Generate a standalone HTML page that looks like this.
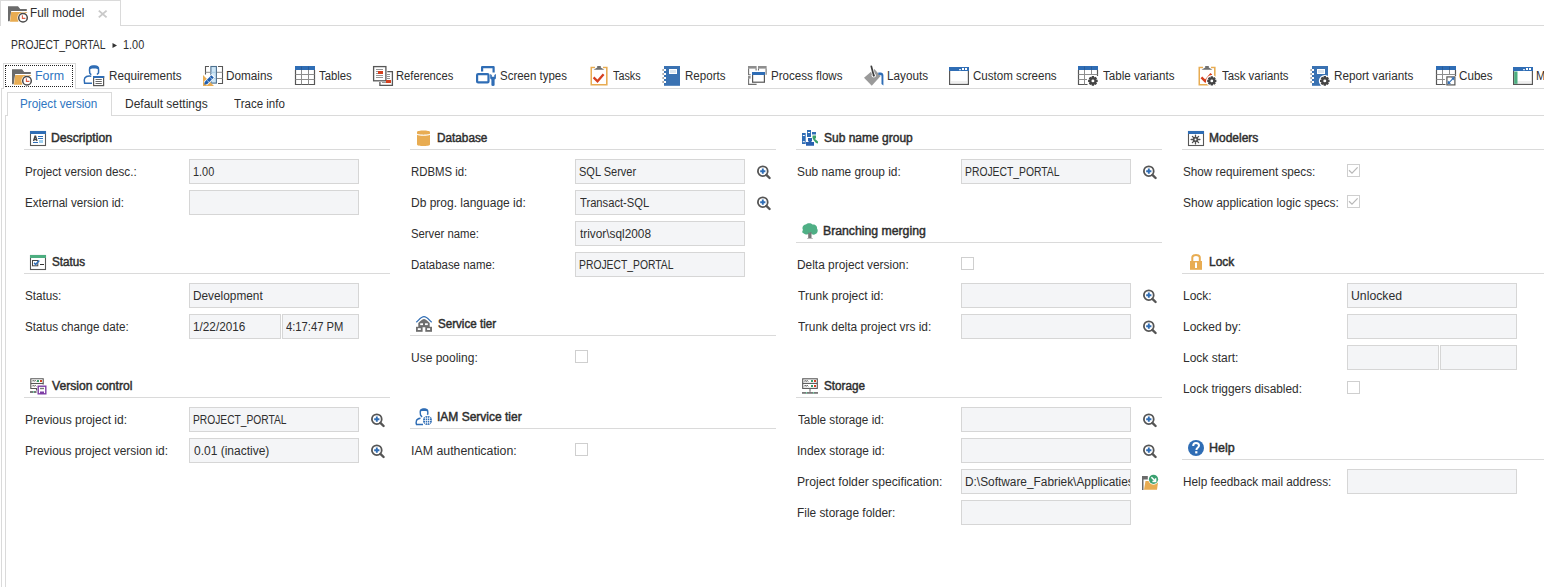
<!DOCTYPE html>
<html><head><meta charset="utf-8"><style>
html,body{margin:0;padding:0;background:#fff;width:1544px;height:587px;overflow:hidden;position:relative}
.t{position:absolute;font-family:"Liberation Sans",sans-serif;font-size:12px;line-height:12px;color:#2E2E2E;white-space:pre}
.blue{color:#2E75C1}
svg{overflow:visible}
</style></head><body>
<div style="position:absolute;left:0px;top:0px;width:121px;height:1px;background:#DADADA"></div>
<div style="position:absolute;left:0px;top:0px;width:1px;height:26px;background:#DADADA"></div>
<div style="position:absolute;left:120px;top:0px;width:1px;height:26px;background:#DADADA"></div>
<div style="position:absolute;left:120px;top:25px;width:1424px;height:1px;background:#DADADA"></div>
<svg style="position:absolute;left:6px;top:3px" width="24" height="22" viewBox="0 0 24 22"><path d="M2 3.2 H12 L14.2 6 H20.8 V8 H5.2 L3.7 18.2 H2 Z" fill="#6B6B6B"/><path d="M5.2 9 H21.5 L19 11 H14 L12.3 18.8 H4 Z" fill="#E8AC52"/><circle cx="17" cy="14.8" r="5.6" fill="#fff"/><circle cx="17" cy="14.8" r="4.3" fill="#fff" stroke="#4A4A4A" stroke-width="1.5"/><path d="M16.4 12.3 V15.4 H19.4" fill="none" stroke="#DD5E43" stroke-width="1.1"/></svg>
<svg style="position:absolute;left:98px;top:10px" width="10" height="8" viewBox="0 0 10 8"><path d="M0.8 0.6 L8.6 7.4 M8.6 0.6 L0.8 7.4" stroke="#C9C9C9" stroke-width="1.9"/></svg>
<svg style="position:absolute;left:112px;top:43px" width="6" height="5" viewBox="0 0 6 5"><path d="M0.5 0 L5 2.5 L0.5 5Z" fill="#333"/></svg>
<div style="position:absolute;left:3px;top:63px;width:73px;height:1px;background:#DADADA"></div>
<div style="position:absolute;left:3px;top:63px;width:1px;height:26px;background:#DADADA"></div>
<div style="position:absolute;left:75px;top:63px;width:1px;height:26px;background:#DADADA"></div>
<div style="position:absolute;left:75px;top:88px;width:1469px;height:1px;background:#DADADA"></div>
<div style="position:absolute;left:1px;top:88px;width:3px;height:1px;background:#DADADA"></div>
<div style="position:absolute;left:1px;top:88px;width:1px;height:499px;background:#DADADA"></div>
<div style="position:absolute;left:5px;top:65px;width:68px;height:22px;box-sizing:border-box;border:1px dotted #222"></div>
<svg style="position:absolute;left:10px;top:66px" width="24" height="22" viewBox="0 0 24 22"><path d="M2 3.2 H12 L14.2 6 H20.8 V8 H5.2 L3.7 18.2 H2 Z" fill="#6B6B6B"/><path d="M5.2 9 H21.5 L19 11 H14 L12.3 18.8 H4 Z" fill="#E8AC52"/><circle cx="17" cy="14.8" r="5.6" fill="#fff"/><circle cx="17" cy="14.8" r="4.3" fill="#fff" stroke="#4A4A4A" stroke-width="1.5"/><path d="M16.4 12.3 V15.4 H19.4" fill="none" stroke="#DD5E43" stroke-width="1.1"/></svg>
<svg style="position:absolute;left:82px;top:64px" width="24" height="24" viewBox="0 0 24 24"><path d="M7.5 6 C7.3 2.5 9 2 12 2 C15 2 16.8 2.5 16.6 6 L16.5 9 L15 10.5 M7.5 6 L7.8 9.2 L9.2 10.8" fill="none" stroke="#2F6DB5" stroke-width="1.5"/><path d="M7.3 5.8 C7.3 2.2 9 1.8 12 1.8 C15 1.8 16.8 2.2 16.8 5.8 L15.5 5 C13 4.4 11 4.4 8.6 5 Z" fill="#2F6DB5"/><path d="M9.3 12.3 C7.5 12 4 12.3 2.8 14 C2 15.5 2.2 18 2.6 19.2 H10" fill="none" stroke="#2F6DB5" stroke-width="1.5"/><rect x="11.6" y="12.6" width="10" height="9" fill="#fff" stroke="#575757" stroke-width="1.2"/><rect x="11" y="12" width="11.2" height="2" fill="#2F6DB5"/><path d="M13.5 15.5 H19.8 M13.5 17.5 H19.8 M13.5 19.5 H19.8" stroke="#575757" stroke-width="0.9"/></svg>
<svg style="position:absolute;left:200px;top:63px" width="26" height="26" viewBox="0 0 26 26"><rect x="10.9" y="3.5" width="5.5" height="16.6" fill="#CDE6F7" stroke="#4C6F8E" stroke-width="1.1"/><path d="M9 3.5 H5.5 V11.5 M18 3.5 H22.5 V20.5 H18" fill="none" stroke="#575757" stroke-width="1.1"/><path d="M5.5 9.3 H10.3 M17 9.3 H22.5 M17 15.5 H22.5" stroke="#8E8E8E" stroke-width="1"/><path d="M11.3 9.3 H16 M11.3 15.5 H16" stroke="#A9CBE3" stroke-width="1"/><path d="M3 12 V23 H14 Z" fill="#E8AC52"/><path d="M5.2 20.8 L13.4 12.6" stroke="#fff" stroke-width="4.8"/><path d="M5.6 20.4 L12.6 13.4" stroke="#1E5FB0" stroke-width="3.4"/><path d="M7.2 17.5 L9 19.3 M10.2 14.5 L12 16.3" stroke="#fff" stroke-width="0.7"/><path d="M4.2 21.8 L5 19 L7 21 Z" fill="#1E5FB0"/></svg>
<svg style="position:absolute;left:292px;top:63px" width="26" height="26" viewBox="0 0 26 26"><rect x="3" y="3" width="20" height="4" fill="#2F6DB5"/><path d="M9.5 3.5 V7 M16.5 3.5 V7" stroke="#2A5C98" stroke-width="1"/><path d="M3.5 7 V21.5 H22.5 V7" fill="none" stroke="#575757" stroke-width="1.2"/><path d="M9.5 7 V21.5 M16.5 7 V21.5 M3.5 11.5 H22.5 M3.5 16.5 H22.5" stroke="#8E8E8E" stroke-width="1"/></svg>
<svg style="position:absolute;left:370px;top:63px" width="26" height="26" viewBox="0 0 26 26"><rect x="3.6" y="3.6" width="12.3" height="14.2" fill="#fff" stroke="#575757" stroke-width="1.3"/><path d="M6 6.5 H13 M6 8.5 H8 M6 10.5 H8 M6 12.5 H13 M6 14.5 H13" stroke="#8A8A8A" stroke-width="0.9"/><rect x="8" y="8" width="5" height="3" fill="#D5401F"/><path d="M17.3 8.6 H22.4 V22.4 H9.9 V19" fill="none" stroke="#575757" stroke-width="1.3"/><path d="M17 11.5 H20 M17 13.5 H20 M17 15.5 H20 M12 19.5 H16" stroke="#8A8A8A" stroke-width="0.9"/><rect x="16" y="17" width="5" height="3" fill="#D5401F"/></svg>
<svg style="position:absolute;left:473px;top:63px" width="26" height="26" viewBox="0 0 26 26"><path d="M9.1 8.6 V4.2 H20.6 V9.5" fill="none" stroke="#2F6DB5" stroke-width="2.2" stroke-linejoin="round"/><rect x="4.1" y="11.1" width="11.4" height="8.3" rx="1" fill="none" stroke="#2F6DB5" stroke-width="2.2"/><path d="M17.2 11 V15 Q17.2 16.2 18.4 16.6 V22 Q18.4 23 20 23 Q21.6 23 21.6 22 V16.6 Q22.9 16.2 22.9 15 V11 L21.3 12 V13.8 H18.8 V12 Z" fill="#2F6DB5"/></svg>
<svg style="position:absolute;left:586px;top:63px" width="26" height="26" viewBox="0 0 26 26"><g transform="translate(0,0)"><path d="M9 4.6 H5.3 V21.8 H20.8 V4.6 H17" fill="none" stroke="#E8AC52" stroke-width="1.6"/><rect x="6" y="5.4" width="14" height="15.6" fill="#fff"/><path d="M11.2 3 H14.8 V4.4 L18.4 6.8 H7.6 L11.2 4.4 Z" fill="#707070"/></g><path d="M7.6 14.4 L11.5 18.3 L17.6 11.2" fill="none" stroke="#D5401F" stroke-width="2.3"/></svg>
<svg style="position:absolute;left:660px;top:63px" width="26" height="26" viewBox="0 0 26 26"><rect x="4" y="3" width="16" height="19.8" fill="#3A72B2"/><rect x="9" y="6" width="8" height="5" fill="#fff"/><rect x="10" y="7" width="6" height="3" fill="#DCE6F0"/><rect x="3" y="6" width="3" height="2" fill="#fff"/><rect x="2.6" y="6" width="1" height="2" fill="#777"/><rect x="3" y="10" width="3" height="2" fill="#fff"/><rect x="2.6" y="10" width="1" height="2" fill="#777"/><rect x="3" y="14" width="3" height="2" fill="#fff"/><rect x="2.6" y="14" width="1" height="2" fill="#777"/><rect x="3" y="18" width="3" height="2" fill="#fff"/><rect x="2.6" y="18" width="1" height="2" fill="#777"/></svg>
<svg style="position:absolute;left:745px;top:63px" width="26" height="26" viewBox="0 0 26 26"><rect x="3" y="3" width="8.6" height="2.6" fill="#8E8E8E"/><rect x="13" y="3" width="8.6" height="2.6" fill="#8E8E8E"/><path d="M3.6 5.5 V11.7 H5.7 M11.1 5.5 V7.5 M13.5 5.5 V7.5 M21.1 5.5 V11.8" fill="none" stroke="#707070" stroke-width="1.1"/><rect x="3" y="13" width="2.6" height="2.6" fill="#8E8E8E"/><path d="M3.6 15.5 V21.4 H11.6" fill="none" stroke="#707070" stroke-width="1.1"/><rect x="7.6" y="9.6" width="11.8" height="9.6" fill="#fff" stroke="#575757" stroke-width="1.2"/><rect x="7" y="9" width="13" height="3" fill="#2F6DB5"/></svg>
<svg style="position:absolute;left:861px;top:63px" width="26" height="26" viewBox="0 0 26 26"><path d="M3 14.8 L13.3 6 L19.6 13 L10.8 22.8 Z" fill="#9A9A9A"/><ellipse cx="12.8" cy="12.5" rx="2.2" ry="2" fill="#fff"/><path d="M10.3 3.3 L12.6 12" stroke="#fff" stroke-width="3" stroke-linecap="round"/><path d="M10.3 3.3 L12.6 12" stroke="#3E3E3E" stroke-width="1.7" stroke-linecap="round"/><circle cx="12.8" cy="12.6" r="1.1" fill="#3E3E3E"/><path d="M17.3 9.6 H19.6 C21.3 9.6 22.4 10.8 22.4 12.3 V22.5 L20.5 21 V12.5 L17.3 11.5 Z" fill="#2F6DB5"/></svg>
<svg style="position:absolute;left:946px;top:63px" width="26" height="26" viewBox="0 0 26 26"><rect x="3.6" y="4.6" width="18.8" height="16.8" fill="#fff" stroke="#575757" stroke-width="1.2"/><rect x="3" y="4" width="20" height="4" fill="#2F6DB5"/><rect x="13" y="6.2" width="2" height="1" fill="#fff"/><rect x="16" y="5" width="2" height="2" fill="#fff"/><rect x="19" y="5" width="2" height="2" fill="#fff"/><rect x="5" y="18" width="16" height="2" fill="#EFEFEF"/></svg>
<svg style="position:absolute;left:1075px;top:63px" width="26" height="26" viewBox="0 0 26 26"><rect x="3" y="3" width="20" height="4" fill="#2F6DB5"/><path d="M9.5 3.5 V7 M16.5 3.5 V7" stroke="#2A5C98" stroke-width="1"/><path d="M22.5 7 V13 M3.5 7 V21.5 H12.5" fill="none" stroke="#575757" stroke-width="1.2"/><path d="M9.5 7 V21.5 M16.5 7 V11.5 M3.5 11.5 H22.5 M3.5 16.5 H12" stroke="#8E8E8E" stroke-width="1"/><path d="M22.68 16.83 L22.68 18.97 L21.12 19.34 L21.20 19.16 L22.04 20.53 L20.53 22.04 L19.16 21.20 L19.34 21.12 L18.97 22.68 L16.83 22.68 L16.46 21.12 L16.64 21.20 L15.27 22.04 L13.76 20.53 L14.60 19.16 L14.68 19.34 L13.12 18.97 L13.12 16.83 L14.68 16.46 L14.60 16.64 L13.76 15.27 L15.27 13.76 L16.64 14.60 L16.46 14.68 L16.83 13.12 L18.97 13.12 L19.34 14.68 L19.16 14.60 L20.53 13.76 L22.04 15.27 L21.20 16.64 L21.12 16.46Z" fill="#444"/><circle cx="17.9" cy="17.9" r="1.47" fill="#fff"/></svg>
<svg style="position:absolute;left:1195px;top:63px" width="26" height="26" viewBox="0 0 26 26"><g transform="translate(-1,0)"><path d="M9 4.6 H5.3 V21.8 H20.8 V4.6 H17" fill="none" stroke="#E8AC52" stroke-width="1.6"/><rect x="6" y="5.4" width="14" height="15.6" fill="#fff"/><path d="M11.2 3 H14.8 V4.4 L18.4 6.8 H7.6 L11.2 4.4 Z" fill="#707070"/></g><path d="M6.4 14.4 L10.2 18.2 L16.3 10.8" fill="none" stroke="#D5401F" stroke-width="2.4"/><circle cx="16.8" cy="17.9" r="5.800000000000001" fill="#fff"/><path d="M21.39 16.87 L21.39 18.93 L19.89 19.28 L19.96 19.11 L20.77 20.42 L19.32 21.87 L18.01 21.06 L18.18 20.99 L17.83 22.49 L15.77 22.49 L15.42 20.99 L15.59 21.06 L14.28 21.87 L12.83 20.42 L13.64 19.11 L13.71 19.28 L12.21 18.93 L12.21 16.87 L13.71 16.52 L13.64 16.69 L12.83 15.38 L14.28 13.93 L15.59 14.74 L15.42 14.81 L15.77 13.31 L17.83 13.31 L18.18 14.81 L18.01 14.74 L19.32 13.93 L20.77 15.38 L19.96 16.69 L19.89 16.52Z" fill="#444"/><circle cx="16.8" cy="17.9" r="1.41" fill="#fff"/></svg>
<svg style="position:absolute;left:1308px;top:63px" width="26" height="26" viewBox="0 0 26 26"><rect x="4" y="3" width="16" height="19.8" fill="#3A72B2"/><rect x="9" y="6" width="8" height="5" fill="#fff"/><rect x="10" y="7" width="6" height="3" fill="#DCE6F0"/><rect x="3" y="6" width="3" height="2" fill="#fff"/><rect x="2.6" y="6" width="1" height="2" fill="#777"/><rect x="3" y="10" width="3" height="2" fill="#fff"/><rect x="2.6" y="10" width="1" height="2" fill="#777"/><rect x="3" y="14" width="3" height="2" fill="#fff"/><rect x="2.6" y="14" width="1" height="2" fill="#777"/><rect x="3" y="18" width="3" height="2" fill="#fff"/><rect x="2.6" y="18" width="1" height="2" fill="#777"/><circle cx="16.8" cy="17.9" r="6.0" fill="#fff"/><path d="M21.58 16.83 L21.58 18.97 L20.02 19.34 L20.10 19.16 L20.94 20.53 L19.43 22.04 L18.06 21.20 L18.24 21.12 L17.87 22.68 L15.73 22.68 L15.36 21.12 L15.54 21.20 L14.17 22.04 L12.66 20.53 L13.50 19.16 L13.58 19.34 L12.02 18.97 L12.02 16.83 L13.58 16.46 L13.50 16.64 L12.66 15.27 L14.17 13.76 L15.54 14.60 L15.36 14.68 L15.73 13.12 L17.87 13.12 L18.24 14.68 L18.06 14.60 L19.43 13.76 L20.94 15.27 L20.10 16.64 L20.02 16.46Z" fill="#444"/><circle cx="16.8" cy="17.9" r="1.47" fill="#fff"/></svg>
<svg style="position:absolute;left:1433px;top:63px" width="26" height="26" viewBox="0 0 26 26"><rect x="3" y="3" width="20" height="4" fill="#2F6DB5"/><path d="M9.5 3.5 V7 M16.5 3.5 V7" stroke="#2A5C98" stroke-width="1"/><path d="M22.5 7 V13 M3.5 7 V21.5 H12.5" fill="none" stroke="#575757" stroke-width="1.2"/><path d="M9.5 7 V21.5 M16.5 7 V11.5 M3.5 11.5 H22.5 M3.5 16.5 H12" stroke="#8E8E8E" stroke-width="1"/><rect x="13.9" y="13.9" width="8" height="8" fill="#fff" stroke="#575757" stroke-width="1.2"/><path d="M15.3 20.3 L20.7 14.9" stroke="#2F6DB5" stroke-width="1.1"/><path d="M14.6 21 L14.9 17.6 L18 20.7 Z M21.4 14.2 L21.1 17.6 L18 14.5 Z" fill="#2F6DB5"/></svg>
<svg style="position:absolute;left:1510px;top:63px" width="26" height="26" viewBox="0 0 26 26"><rect x="3.6" y="4.6" width="18.8" height="16.8" fill="#fff" stroke="#575757" stroke-width="1.2"/><rect x="3" y="4" width="20" height="4" fill="#2F6DB5"/><rect x="13" y="6.2" width="2" height="1" fill="#fff"/><rect x="16" y="5" width="2" height="2" fill="#fff"/><rect x="19" y="5" width="2" height="2" fill="#fff"/><rect x="5" y="18" width="16" height="2" fill="#EFEFEF"/><rect x="4.2" y="8.5" width="3.3" height="12.3" fill="#4DAE80"/></svg>
<div style="position:absolute;left:7px;top:92px;width:105px;height:1px;background:#DADADA"></div>
<div style="position:absolute;left:7px;top:92px;width:1px;height:24px;background:#DADADA"></div>
<div style="position:absolute;left:111px;top:92px;width:1px;height:24px;background:#DADADA"></div>
<div style="position:absolute;left:111px;top:115px;width:1433px;height:1px;background:#DADADA"></div>
<div style="position:absolute;left:5px;top:115px;width:3px;height:1px;background:#DADADA"></div>
<div style="position:absolute;left:5px;top:115px;width:1px;height:472px;background:#DADADA"></div>
<div style="position:absolute;left:24px;top:149px;width:366px;height:1px;background:#DADADA"></div>
<svg style="position:absolute;left:28px;top:128px" width="20" height="20" viewBox="0 0 20 20"><rect x="2.5" y="3.5" width="15" height="14" fill="#fff" stroke="#575757" stroke-width="1.1"/><rect x="2" y="3" width="16" height="3" fill="#2F6DB5"/><path d="M5.5 13 L7 8.2 H7.6 L9 13 M6 11.5 H8.6" fill="none" stroke="#444" stroke-width="1.3"/><path d="M10 8.5 H15 M10 10.5 H15 M5 14.5 H10" stroke="#2F6DB5" stroke-width="1"/><rect x="11" y="12" width="4" height="3" fill="#9FD0F0"/></svg>
<div style="position:absolute;left:189px;top:159px;width:170px;height:25px;background:#F4F5F7;border:1px solid #D6D6D6;box-sizing:border-box"></div>
<div style="position:absolute;left:189px;top:190px;width:170px;height:25px;background:#F4F5F7;border:1px solid #D6D6D6;box-sizing:border-box"></div>
<div style="position:absolute;left:24px;top:273px;width:366px;height:1px;background:#DADADA"></div>
<svg style="position:absolute;left:28px;top:252px" width="20" height="20" viewBox="0 0 20 20"><rect x="2.5" y="3.5" width="15" height="14" fill="#fff" stroke="#575757" stroke-width="1.1"/><rect x="2" y="3" width="16" height="3" fill="#4DAE80"/><rect x="4.5" y="8.5" width="5.3" height="5.3" fill="none" stroke="#444" stroke-width="1"/><path d="M6.2 10.8 L7.6 12.6 L11.3 8.6" fill="none" stroke="#2F6DB5" stroke-width="1.5"/><path d="M12 12.5 H16" stroke="#333" stroke-width="1"/></svg>
<div style="position:absolute;left:189px;top:283px;width:170px;height:25px;background:#F4F5F7;border:1px solid #D6D6D6;box-sizing:border-box"></div>
<div style="position:absolute;left:189px;top:314px;width:92px;height:25px;background:#F4F5F7;border:1px solid #D6D6D6;box-sizing:border-box"></div>
<div style="position:absolute;left:282px;top:314px;width:77px;height:25px;background:#F4F5F7;border:1px solid #D6D6D6;box-sizing:border-box"></div>
<div style="position:absolute;left:24px;top:397px;width:366px;height:1px;background:#DADADA"></div>
<svg style="position:absolute;left:28px;top:376px" width="20" height="20" viewBox="0 0 20 20"><path d="M8.5 14.5 V12.5 H2.8 V2.8 H15.2 V8.5" fill="#fff" stroke="#575757" stroke-width="1.1"/><path d="M2.8 7.5 H15.2" stroke="#575757" stroke-width="1.1"/><path d="M4.2 5.4 L5.2 4.3 L6.2 5.4 L7.2 4.3 L8.2 5.4 M4.2 10.4 L5.2 9.3 L6.2 10.4 L7.2 9.3 L8.2 10.4" fill="none" stroke="#555" stroke-width="1"/><rect x="9" y="4" width="2" height="2" fill="#3A9F6A"/><rect x="12" y="4" width="2" height="2" fill="#D5401F"/><rect x="2" y="15" width="6.5" height="2" fill="#7A7A7A"/><rect x="5" y="15" width="1" height="2" fill="#7BD3A8"/><rect x="10.2" y="10.2" width="7.6" height="7.6" fill="#fff" stroke="#7E3DA6" stroke-width="1.4"/><rect x="12" y="11.8" width="4" height="1.4" fill="#777"/><path d="M12 18 V15.5 H16 V18" fill="#7E3DA6"/></svg>
<div style="position:absolute;left:189px;top:407px;width:170px;height:25px;background:#F4F5F7;border:1px solid #D6D6D6;box-sizing:border-box"></div>
<svg style="position:absolute;left:370px;top:413px" width="16" height="16" viewBox="0 0 16 16"><circle cx="6.8" cy="6.2" r="4.9" fill="#fff" stroke="#555" stroke-width="1.8"/><path d="M10.4 9.8 L13.6 13" stroke="#555" stroke-width="2.4" stroke-linecap="round"/><path d="M6.8 3.6 V8.8 M4.2 6.2 H9.4" stroke="#2F6DB5" stroke-width="1.9"/></svg>
<div style="position:absolute;left:189px;top:438px;width:170px;height:25px;background:#F4F5F7;border:1px solid #D6D6D6;box-sizing:border-box"></div>
<svg style="position:absolute;left:370px;top:444px" width="16" height="16" viewBox="0 0 16 16"><circle cx="6.8" cy="6.2" r="4.9" fill="#fff" stroke="#555" stroke-width="1.8"/><path d="M10.4 9.8 L13.6 13" stroke="#555" stroke-width="2.4" stroke-linecap="round"/><path d="M6.8 3.6 V8.8 M4.2 6.2 H9.4" stroke="#2F6DB5" stroke-width="1.9"/></svg>
<div style="position:absolute;left:410px;top:149px;width:366px;height:1px;background:#DADADA"></div>
<svg style="position:absolute;left:414px;top:128px" width="20" height="20" viewBox="0 0 20 20"><path d="M3 4 C3 2 16 2 16 4 V5.5 C16 7 3 7 3 5.5 Z" fill="#E8AC52"/><path d="M3 6.8 C5 8.2 14 8.2 16 6.8 V16.5 C16 18.5 3 18.5 3 16.5 Z" fill="#E8AC52"/></svg>
<div style="position:absolute;left:575px;top:159px;width:170px;height:25px;background:#F4F5F7;border:1px solid #D6D6D6;box-sizing:border-box"></div>
<svg style="position:absolute;left:756px;top:165px" width="16" height="16" viewBox="0 0 16 16"><circle cx="6.8" cy="6.2" r="4.9" fill="#fff" stroke="#555" stroke-width="1.8"/><path d="M10.4 9.8 L13.6 13" stroke="#555" stroke-width="2.4" stroke-linecap="round"/><path d="M6.8 3.6 V8.8 M4.2 6.2 H9.4" stroke="#2F6DB5" stroke-width="1.9"/></svg>
<div style="position:absolute;left:575px;top:190px;width:170px;height:25px;background:#F4F5F7;border:1px solid #D6D6D6;box-sizing:border-box"></div>
<svg style="position:absolute;left:756px;top:196px" width="16" height="16" viewBox="0 0 16 16"><circle cx="6.8" cy="6.2" r="4.9" fill="#fff" stroke="#555" stroke-width="1.8"/><path d="M10.4 9.8 L13.6 13" stroke="#555" stroke-width="2.4" stroke-linecap="round"/><path d="M6.8 3.6 V8.8 M4.2 6.2 H9.4" stroke="#2F6DB5" stroke-width="1.9"/></svg>
<div style="position:absolute;left:575px;top:221px;width:170px;height:25px;background:#F4F5F7;border:1px solid #D6D6D6;box-sizing:border-box"></div>
<div style="position:absolute;left:575px;top:252px;width:170px;height:25px;background:#F4F5F7;border:1px solid #D6D6D6;box-sizing:border-box"></div>
<div style="position:absolute;left:410px;top:335px;width:366px;height:1px;background:#DADADA"></div>
<svg style="position:absolute;left:414px;top:314px" width="20" height="20" viewBox="0 0 20 20"><path d="M2.3 8.3 C5 6 7 2.6 10 2.6 C13 2.6 15 6 17.7 8.3" fill="none" stroke="#2F6DB5" stroke-width="1.3"/><path d="M4.3 13.2 V9 C6 7.5 8 5 10 5 C12 5 14 7.5 15.7 9 V13.2 Z" fill="#6E6E6E"/><rect x="6.2" y="9.3" width="2.8" height="1.8" fill="#fff"/><rect x="11" y="9.3" width="2.8" height="1.8" fill="#fff"/><rect x="2" y="12.8" width="6.6" height="5" fill="#6E6E6E"/><rect x="11.3" y="12.8" width="6.7" height="5" fill="#6E6E6E"/><rect x="3.8" y="14.2" width="3" height="1.8" fill="#fff"/><rect x="13.1" y="14.2" width="3" height="1.8" fill="#fff"/></svg>
<div style="position:absolute;left:575px;top:350px;width:13px;height:13px;border:1px solid #CFCFCF;box-sizing:border-box;background:#fff"></div>
<div style="position:absolute;left:410px;top:428px;width:366px;height:1px;background:#DADADA"></div>
<svg style="position:absolute;left:414px;top:407px" width="20" height="20" viewBox="0 0 20 20"><path d="M6.2 5 C6 2.3 8 2 10 2 C12.3 2 14 2.3 13.8 5 V7 L13 7.5 M6.2 5 L6.5 8 L8 10" fill="none" stroke="#2F6DB5" stroke-width="1.4"/><path d="M6 4.8 C6 2 8 1.8 10 1.8 C12.3 1.8 14 2 14 4.8 L13 4.3 C11 3.9 9 3.9 7 4.3 Z" fill="#2F6DB5"/><path d="M6.5 11.3 C5 11.5 3 12 2.5 13.5 C2 15 2.3 17 2.5 17.5 H9" fill="none" stroke="#2F6DB5" stroke-width="1.4"/><circle cx="13.5" cy="13.5" r="5.3" fill="#fff"/><circle cx="13.5" cy="13.5" r="4.5" fill="#2F6DB5"/><path d="M9.3 13.5 H17.7 M13.5 9.3 V17.7 M10.3 11.2 H16.7 M10.3 15.8 H16.7 M11.5 9.8 V17.2 M15.5 9.8 V17.2" stroke="#fff" stroke-width="0.7"/></svg>
<div style="position:absolute;left:575px;top:443px;width:13px;height:13px;border:1px solid #CFCFCF;box-sizing:border-box;background:#fff"></div>
<div style="position:absolute;left:796px;top:149px;width:366px;height:1px;background:#DADADA"></div>
<svg style="position:absolute;left:800px;top:128px" width="20" height="20" viewBox="0 0 20 20"><rect x="2" y="5" width="3.7" height="11" fill="#2F6DB5"/><rect x="7" y="2" width="4" height="7" fill="#2F6DB5"/><rect x="12" y="4" width="4" height="2.5" fill="#2F6DB5"/><rect x="2.8" y="7" width="2" height="1" fill="#fff"/><rect x="2.8" y="13.2" width="2" height="1" fill="#fff"/><rect x="7.8" y="4" width="2.3" height="1" fill="#fff"/><path d="M8 10 H12 V13 L11 14 H14 V17.8 H6 V14 H9 L8 13 Z" fill="#2860B0"/><path d="M12.5 7.5 H16 V10 L15 11 L18 13.5 V15.5 L16 15 L13.5 12 L12.5 10 Z" fill="#3A9F6A"/></svg>
<div style="position:absolute;left:961px;top:159px;width:170px;height:25px;background:#F4F5F7;border:1px solid #D6D6D6;box-sizing:border-box"></div>
<svg style="position:absolute;left:1142px;top:165px" width="16" height="16" viewBox="0 0 16 16"><circle cx="6.8" cy="6.2" r="4.9" fill="#fff" stroke="#555" stroke-width="1.8"/><path d="M10.4 9.8 L13.6 13" stroke="#555" stroke-width="2.4" stroke-linecap="round"/><path d="M6.8 3.6 V8.8 M4.2 6.2 H9.4" stroke="#2F6DB5" stroke-width="1.9"/></svg>
<div style="position:absolute;left:796px;top:242px;width:366px;height:1px;background:#DADADA"></div>
<svg style="position:absolute;left:800px;top:221px" width="20" height="20" viewBox="0 0 20 20"><path d="M3 9 C1.5 6 3.5 3.5 6 3.5 C7 2 11 1.8 12.5 3.5 C15 3 17.5 5 17 7.5 C18.5 9 17.5 12.5 15.5 13 C14 14.5 11.5 13.5 11 12 L9.5 12.5 C8 14 5 13.8 4 12.5 C2 12 1.8 10.5 3 9 Z" fill="#4FAF85"/><path d="M8.2 11 L9 12.5 L10 11.5 L11.5 11 L11.5 17 H12.8 V17.6 H7.2 V17 H8.2 Z" fill="#777"/></svg>
<div style="position:absolute;left:961px;top:257px;width:13px;height:13px;border:1px solid #CFCFCF;box-sizing:border-box;background:#fff"></div>
<div style="position:absolute;left:961px;top:283px;width:170px;height:25px;background:#F4F5F7;border:1px solid #D6D6D6;box-sizing:border-box"></div>
<svg style="position:absolute;left:1142px;top:289px" width="16" height="16" viewBox="0 0 16 16"><circle cx="6.8" cy="6.2" r="4.9" fill="#fff" stroke="#555" stroke-width="1.8"/><path d="M10.4 9.8 L13.6 13" stroke="#555" stroke-width="2.4" stroke-linecap="round"/><path d="M6.8 3.6 V8.8 M4.2 6.2 H9.4" stroke="#2F6DB5" stroke-width="1.9"/></svg>
<div style="position:absolute;left:961px;top:314px;width:170px;height:25px;background:#F4F5F7;border:1px solid #D6D6D6;box-sizing:border-box"></div>
<svg style="position:absolute;left:1142px;top:320px" width="16" height="16" viewBox="0 0 16 16"><circle cx="6.8" cy="6.2" r="4.9" fill="#fff" stroke="#555" stroke-width="1.8"/><path d="M10.4 9.8 L13.6 13" stroke="#555" stroke-width="2.4" stroke-linecap="round"/><path d="M6.8 3.6 V8.8 M4.2 6.2 H9.4" stroke="#2F6DB5" stroke-width="1.9"/></svg>
<div style="position:absolute;left:796px;top:397px;width:366px;height:1px;background:#DADADA"></div>
<svg style="position:absolute;left:800px;top:376px" width="20" height="20" viewBox="0 0 20 20"><rect x="2.7" y="2.8" width="14.6" height="9.6" fill="#fff" stroke="#575757" stroke-width="1.1"/><path d="M2.7 7.4 H17.3" stroke="#575757" stroke-width="1.1"/><path d="M4.2 5.6 L5.2 4.4 L6.2 5.6 L7.2 4.4 L8.2 5.6 M4.2 10.4 L5.2 9.2 L6.2 10.4 L7.2 9.2 L8.2 10.4" fill="none" stroke="#555" stroke-width="1"/><rect x="11" y="4" width="2" height="2" fill="#3A9F6A"/><rect x="14" y="4" width="2" height="2" fill="#D5401F"/><rect x="11" y="9" width="2" height="2" fill="#3A9F6A"/><rect x="14" y="9" width="2" height="2" fill="#D5401F"/><rect x="9.4" y="12.8" width="1.2" height="3" fill="#777"/><rect x="2" y="16" width="16" height="1.8" fill="#7A7A7A"/><rect x="6" y="16" width="1" height="1.8" fill="#7BD3A8"/><rect x="13" y="16" width="1" height="1.8" fill="#7BD3A8"/></svg>
<div style="position:absolute;left:961px;top:407px;width:170px;height:25px;background:#F4F5F7;border:1px solid #D6D6D6;box-sizing:border-box"></div>
<svg style="position:absolute;left:1142px;top:413px" width="16" height="16" viewBox="0 0 16 16"><circle cx="6.8" cy="6.2" r="4.9" fill="#fff" stroke="#555" stroke-width="1.8"/><path d="M10.4 9.8 L13.6 13" stroke="#555" stroke-width="2.4" stroke-linecap="round"/><path d="M6.8 3.6 V8.8 M4.2 6.2 H9.4" stroke="#2F6DB5" stroke-width="1.9"/></svg>
<div style="position:absolute;left:961px;top:438px;width:170px;height:25px;background:#F4F5F7;border:1px solid #D6D6D6;box-sizing:border-box"></div>
<svg style="position:absolute;left:1142px;top:444px" width="16" height="16" viewBox="0 0 16 16"><circle cx="6.8" cy="6.2" r="4.9" fill="#fff" stroke="#555" stroke-width="1.8"/><path d="M10.4 9.8 L13.6 13" stroke="#555" stroke-width="2.4" stroke-linecap="round"/><path d="M6.8 3.6 V8.8 M4.2 6.2 H9.4" stroke="#2F6DB5" stroke-width="1.9"/></svg>
<div style="position:absolute;left:961px;top:469px;width:170px;height:25px;background:#F4F5F7;border:1px solid #D6D6D6;box-sizing:border-box"></div>
<svg style="position:absolute;left:1138px;top:470px" width="24" height="24" viewBox="0 0 24 24"><path d="M4 6 H9.8 V9.5 H5.5 L5.5 20 H4 Z" fill="#6B6B6B"/><path d="M7.5 11 H14 L16 12.5 H20 L19 19.8 H6 Z" fill="#E8AC52"/><circle cx="15.5" cy="9.3" r="5.4" fill="#fff"/><circle cx="15.5" cy="9.3" r="4.6" fill="#3AA070"/><path d="M13.4 7.2 L17.2 11 M17.6 8.2 V11.4 H14.4" fill="none" stroke="#fff" stroke-width="1.5"/></svg>
<div style="position:absolute;left:961px;top:500px;width:170px;height:25px;background:#F4F5F7;border:1px solid #D6D6D6;box-sizing:border-box"></div>
<div style="position:absolute;left:1182px;top:149px;width:362px;height:1px;background:#DADADA"></div>
<svg style="position:absolute;left:1186px;top:128px" width="20" height="20" viewBox="0 0 20 20"><rect x="2.5" y="3.5" width="15" height="14" fill="#fff" stroke="#575757" stroke-width="1.1"/><rect x="2" y="3" width="16" height="3" fill="#2F6DB5"/><path d="M11.30 11.50 L13.90 11.50" stroke="#505050" stroke-width="1.3" stroke-linecap="round"/><path d="M10.77 12.77 L12.61 14.61" stroke="#505050" stroke-width="1.3" stroke-linecap="round"/><path d="M9.50 13.30 L9.50 15.90" stroke="#505050" stroke-width="1.3" stroke-linecap="round"/><path d="M8.23 12.77 L6.39 14.61" stroke="#505050" stroke-width="1.3" stroke-linecap="round"/><path d="M7.70 11.50 L5.10 11.50" stroke="#505050" stroke-width="1.3" stroke-linecap="round"/><path d="M8.23 10.23 L6.39 8.39" stroke="#505050" stroke-width="1.3" stroke-linecap="round"/><path d="M9.50 9.70 L9.50 7.10" stroke="#505050" stroke-width="1.3" stroke-linecap="round"/><path d="M10.77 10.23 L12.61 8.39" stroke="#505050" stroke-width="1.3" stroke-linecap="round"/><circle cx="9.5" cy="11.5" r="2.7" fill="#505050"/><circle cx="9.5" cy="11.5" r="1" fill="#fff"/></svg>
<div style="position:absolute;left:1347px;top:164px;width:13px;height:13px;border:1px solid #CFCFCF;box-sizing:border-box;background:#fff"></div>
<svg style="position:absolute;left:1347px;top:164px" width="13" height="13" viewBox="0 0 13 13"><path d="M2 6.3 L5 9.2 L10.6 3.3" fill="none" stroke="#B8B8B8" stroke-width="1.2"/></svg>
<div style="position:absolute;left:1347px;top:195px;width:13px;height:13px;border:1px solid #CFCFCF;box-sizing:border-box;background:#fff"></div>
<svg style="position:absolute;left:1347px;top:195px" width="13" height="13" viewBox="0 0 13 13"><path d="M2 6.3 L5 9.2 L10.6 3.3" fill="none" stroke="#B8B8B8" stroke-width="1.2"/></svg>
<div style="position:absolute;left:1182px;top:273px;width:362px;height:1px;background:#DADADA"></div>
<svg style="position:absolute;left:1186px;top:252px" width="20" height="20" viewBox="0 0 20 20"><path d="M6.3 9 V5.5 C6.3 3.5 7.5 3 10 3 C12.5 3 13.8 3.5 13.8 5.5 V9" fill="none" stroke="#E8AC52" stroke-width="2"/><rect x="4" y="9" width="12" height="8.8" fill="#E8AC52"/><rect x="9" y="10.5" width="2" height="5.5" fill="#fff"/></svg>
<div style="position:absolute;left:1347px;top:283px;width:170px;height:25px;background:#F4F5F7;border:1px solid #D6D6D6;box-sizing:border-box"></div>
<div style="position:absolute;left:1347px;top:314px;width:170px;height:25px;background:#F4F5F7;border:1px solid #D6D6D6;box-sizing:border-box"></div>
<div style="position:absolute;left:1347px;top:345px;width:92px;height:25px;background:#F4F5F7;border:1px solid #D6D6D6;box-sizing:border-box"></div>
<div style="position:absolute;left:1440px;top:345px;width:77px;height:25px;background:#F4F5F7;border:1px solid #D6D6D6;box-sizing:border-box"></div>
<div style="position:absolute;left:1347px;top:381px;width:13px;height:13px;border:1px solid #CFCFCF;box-sizing:border-box;background:#fff"></div>
<div style="position:absolute;left:1182px;top:459px;width:362px;height:1px;background:#DADADA"></div>
<svg style="position:absolute;left:1186px;top:438px" width="20" height="20" viewBox="0 0 20 20"><circle cx="10" cy="10" r="8" fill="#2F6DB5"/><path d="M7.2 8 C7.2 5.8 8.5 5 10 5 C11.8 5 13 6 13 7.5 C13 9.5 10.5 9.8 10.5 11.5 V12" fill="none" stroke="#fff" stroke-width="2"/><rect x="9.2" y="13.2" width="2.2" height="2.2" fill="#fff"/></svg>
<div style="position:absolute;left:1347px;top:469px;width:170px;height:25px;background:#F4F5F7;border:1px solid #D6D6D6;box-sizing:border-box"></div>
<div class="t " style="left:30.02px;top:7px;transform:scaleX(0.9815);transform-origin:0 0;">Full model</div>
<div class="t " style="left:11.14px;top:39px;transform:scaleX(0.8624);transform-origin:0 0;">PROJECT_PORTAL</div>
<div class="t " style="left:123.09px;top:39px;transform:scaleX(0.9091);transform-origin:0 0;">1.00</div>
<div class="t blue" style="left:34.96px;top:70px;transform:scaleX(1.0385);transform-origin:0 0;">Form</div>
<div class="t " style="left:109.03px;top:70px;transform:scaleX(0.9726);transform-origin:0 0;">Requirements</div>
<div class="t " style="left:226.02px;top:70px;transform:scaleX(0.9783);transform-origin:0 0;">Domains</div>
<div class="t " style="left:319.00px;top:70px;transform:scaleX(0.9412);transform-origin:0 0;">Tables</div>
<div class="t " style="left:396.07px;top:70px;transform:scaleX(0.9333);transform-origin:0 0;">References</div>
<div class="t " style="left:500.04px;top:70px;transform:scaleX(0.9565);transform-origin:0 0;">Screen types</div>
<div class="t " style="left:613.00px;top:70px;transform:scaleX(0.9000);transform-origin:0 0;">Tasks</div>
<div class="t " style="left:685.04px;top:70px;transform:scaleX(0.9634);transform-origin:0 0;">Reports</div>
<div class="t " style="left:771.03px;top:70px;transform:scaleX(0.9658);transform-origin:0 0;">Process flows</div>
<div class="t " style="left:887.02px;top:70px;transform:scaleX(0.9756);transform-origin:0 0;">Layouts</div>
<div class="t " style="left:973.04px;top:70px;transform:scaleX(0.9647);transform-origin:0 0;">Custom screens</div>
<div class="t " style="left:1103.00px;top:70px;transform:scaleX(0.9662);transform-origin:0 0;">Table variants</div>
<div class="t " style="left:1222.00px;top:70px;transform:scaleX(0.9500);transform-origin:0 0;">Task variants</div>
<div class="t " style="left:1334.03px;top:70px;transform:scaleX(0.9750);transform-origin:0 0;">Report variants</div>
<div class="t " style="left:1459.03px;top:70px;transform:scaleX(0.9697);transform-origin:0 0;">Cubes</div>
<div class="t " style="left:1536.06px;top:70px;transform:scaleX(0.9400);transform-origin:0 0;">Modules</div>
<div class="t blue" style="left:20.03px;top:98px;transform:scaleX(0.9744);transform-origin:0 0;">Project version</div>
<div class="t " style="left:125.00px;top:98px;transform:scaleX(1.0000);transform-origin:0 0;">Default settings</div>
<div class="t " style="left:234.00px;top:98px;transform:scaleX(0.9623);transform-origin:0 0;">Trace info</div>
<div class="t " style="left:50.98px;top:132px;transform:scaleX(1.0169);transform-origin:0 0;-webkit-text-stroke:0.45px #2E2E2E;">Description</div>
<div class="t " style="left:25.03px;top:166px;transform:scaleX(0.9735);transform-origin:0 0;">Project version desc.:</div>
<div class="t " style="left:193.09px;top:166px;transform:scaleX(0.9091);transform-origin:0 0;width:1030.6px;overflow:hidden;height:16px;">1.00</div>
<div class="t " style="left:25.03px;top:197px;transform:scaleX(0.9700);transform-origin:0 0;">External version id:</div>
<div class="t " style="left:52.00px;top:256px;transform:scaleX(0.9706);transform-origin:0 0;-webkit-text-stroke:0.45px #2E2E2E;">Status</div>
<div class="t " style="left:25.03px;top:290px;transform:scaleX(0.9714);transform-origin:0 0;">Status:</div>
<div class="t " style="left:193.01px;top:290px;transform:scaleX(0.9857);transform-origin:0 0;width:950.6px;overflow:hidden;height:16px;">Development</div>
<div class="t " style="left:25.03px;top:321px;transform:scaleX(0.9714);transform-origin:0 0;">Status change date:</div>
<div class="t " style="left:193.02px;top:321px;transform:scaleX(0.9808);transform-origin:0 0;">1/22/2016</div>
<div class="t " style="left:286.00px;top:321px;transform:scaleX(0.9344);transform-origin:0 0;">4:17:47 PM</div>
<div class="t " style="left:52.00px;top:380px;transform:scaleX(1.0127);transform-origin:0 0;-webkit-text-stroke:0.45px #2E2E2E;">Version control</div>
<div class="t " style="left:25.00px;top:414px;transform:scaleX(1.0000);transform-origin:0 0;">Previous project id:</div>
<div class="t " style="left:193.15px;top:414px;transform:scaleX(0.8532);transform-origin:0 0;width:1098.0px;overflow:hidden;height:16px;">PROJECT_PORTAL</div>
<div class="t " style="left:25.01px;top:445px;transform:scaleX(0.9930);transform-origin:0 0;">Previous project version id:</div>
<div class="t " style="left:194.00px;top:445px;transform:scaleX(1.0000);transform-origin:0 0;width:936.0px;overflow:hidden;height:16px;">0.01 (inactive)</div>
<div class="t " style="left:437.02px;top:132px;transform:scaleX(0.9800);transform-origin:0 0;-webkit-text-stroke:0.45px #2E2E2E;">Database</div>
<div class="t " style="left:411.05px;top:166px;transform:scaleX(0.9474);transform-origin:0 0;">RDBMS id:</div>
<div class="t " style="left:579.08px;top:166px;transform:scaleX(0.9180);transform-origin:0 0;width:600.1px;overflow:hidden;height:16px;">SQL Server</div>
<div class="t " style="left:411.00px;top:197px;transform:scaleX(1.0000);transform-origin:0 0;">Db prog. language id:</div>
<div class="t " style="left:580.00px;top:197px;transform:scaleX(0.9324);transform-origin:0 0;width:589.9px;overflow:hidden;height:16px;">Transact-SQL</div>
<div class="t " style="left:411.06px;top:228px;transform:scaleX(0.9429);transform-origin:0 0;">Server name:</div>
<div class="t " style="left:580.00px;top:228px;transform:scaleX(0.9861);transform-origin:0 0;width:557.7px;overflow:hidden;height:16px;">trivor\sql2008</div>
<div class="t " style="left:411.05px;top:259px;transform:scaleX(0.9535);transform-origin:0 0;">Database name:</div>
<div class="t " style="left:579.14px;top:259px;transform:scaleX(0.8624);transform-origin:0 0;width:638.8px;overflow:hidden;height:16px;">PROJECT_PORTAL</div>
<div class="t " style="left:438.00px;top:318px;transform:scaleX(0.9667);transform-origin:0 0;-webkit-text-stroke:0.45px #2E2E2E;">Service tier</div>
<div class="t " style="left:411.00px;top:352px;transform:scaleX(1.0000);transform-origin:0 0;">Use pooling:</div>
<div class="t " style="left:437.00px;top:411px;transform:scaleX(1.0000);transform-origin:0 0;-webkit-text-stroke:0.45px #2E2E2E;">IAM Service tier</div>
<div class="t " style="left:410.97px;top:445px;transform:scaleX(1.0297);transform-origin:0 0;">IAM authentication:</div>
<div class="t " style="left:824.00px;top:132px;transform:scaleX(1.0000);transform-origin:0 0;-webkit-text-stroke:0.45px #2E2E2E;">Sub name group</div>
<div class="t " style="left:797.01px;top:166px;transform:scaleX(0.9903);transform-origin:0 0;">Sub name group id:</div>
<div class="t " style="left:965.14px;top:166px;transform:scaleX(0.8624);transform-origin:0 0;width:191.2px;overflow:hidden;height:16px;">PROJECT_PORTAL</div>
<div class="t " style="left:822.98px;top:225px;transform:scaleX(1.0202);transform-origin:0 0;-webkit-text-stroke:0.45px #2E2E2E;">Branching merging</div>
<div class="t " style="left:797.01px;top:259px;transform:scaleX(0.9910);transform-origin:0 0;">Delta project version:</div>
<div class="t " style="left:798.00px;top:290px;transform:scaleX(1.0000);transform-origin:0 0;">Trunk project id:</div>
<div class="t " style="left:798.00px;top:321px;transform:scaleX(0.9925);transform-origin:0 0;">Trunk delta project vrs id:</div>
<div class="t " style="left:824.00px;top:380px;transform:scaleX(0.9762);transform-origin:0 0;-webkit-text-stroke:0.45px #2E2E2E;">Storage</div>
<div class="t " style="left:798.00px;top:414px;transform:scaleX(0.9770);transform-origin:0 0;">Table storage id:</div>
<div class="t " style="left:797.01px;top:445px;transform:scaleX(0.9885);transform-origin:0 0;">Index storage id:</div>
<div class="t " style="left:796.99px;top:476px;transform:scaleX(1.0142);transform-origin:0 0;">Project folder specification:</div>
<div class="t " style="left:965.01px;top:476px;transform:scaleX(0.9882);transform-origin:0 0;width:167.0px;overflow:hidden;height:16px;">D:\Software_Fabriek\Applicaties\PROJECT_PORTAL</div>
<div class="t " style="left:797.01px;top:507px;transform:scaleX(0.9897);transform-origin:0 0;">File storage folder:</div>
<div class="t " style="left:1209.00px;top:132px;transform:scaleX(1.0000);transform-origin:0 0;-webkit-text-stroke:0.45px #2E2E2E;">Modelers</div>
<div class="t " style="left:1183.02px;top:166px;transform:scaleX(0.9774);transform-origin:0 0;">Show requirement specs:</div>
<div class="t " style="left:1183.01px;top:197px;transform:scaleX(0.9935);transform-origin:0 0;">Show application logic specs:</div>
<div class="t " style="left:1209.00px;top:256px;transform:scaleX(1.0000);transform-origin:0 0;-webkit-text-stroke:0.45px #2E2E2E;">Lock</div>
<div class="t " style="left:1183.00px;top:290px;transform:scaleX(1.0000);transform-origin:0 0;">Lock:</div>
<div class="t " style="left:1350.98px;top:290px;transform:scaleX(1.0208);transform-origin:0 0;width:-216.5px;overflow:hidden;height:16px;">Unlocked</div>
<div class="t " style="left:1183.00px;top:321px;transform:scaleX(1.0000);transform-origin:0 0;">Locked by:</div>
<div class="t " style="left:1183.00px;top:352px;transform:scaleX(1.0000);transform-origin:0 0;">Lock start:</div>
<div class="t " style="left:1183.01px;top:383px;transform:scaleX(0.9915);transform-origin:0 0;">Lock triggers disabled:</div>
<div class="t " style="left:1208.96px;top:442px;transform:scaleX(1.0417);transform-origin:0 0;-webkit-text-stroke:0.45px #2E2E2E;">Help</div>
<div class="t " style="left:1183.02px;top:476px;transform:scaleX(0.9799);transform-origin:0 0;">Help feedback mail address:</div>
</body></html>
